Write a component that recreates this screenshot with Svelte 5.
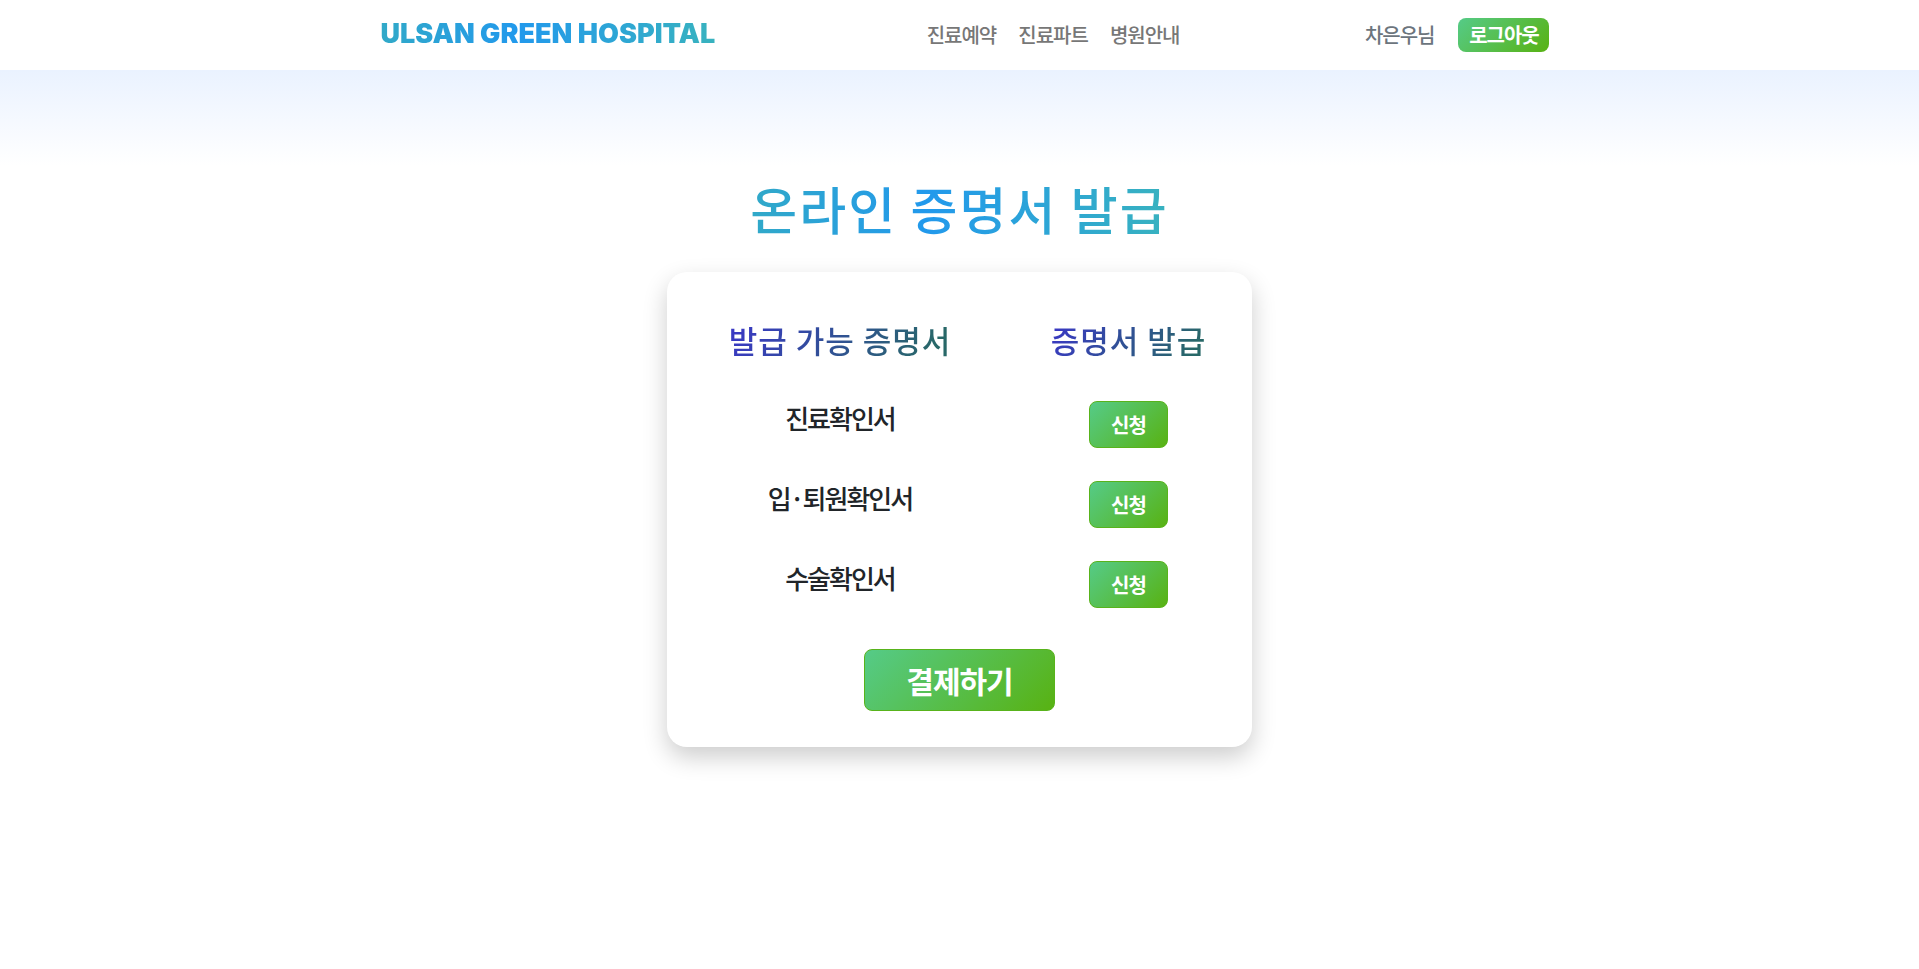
<script>
  const links = ['진료예약', '진료파트', '병원안내'];
  const certificates = ['진료확인서', '입·퇴원확인서', '수술확인서'];
</script>

<header>
  <div class="bar">
    <a class="logo" href="#home">ULSAN GREEN HOSPITAL</a>
    <nav>
      {#each links as link}
        <a href="#menu">{link}</a>
      {/each}
    </nav>
    <div class="user">
      <span>차은우님</span>
      <button class="green logout" type="button">로그아웃</button>
    </div>
  </div>
</header>

<main>
  <h1>온라인 증명서 발급</h1>
  <section class="card">
    <table>
      <thead>
        <tr>
          <th><span>발급 가능 증명서</span></th>
          <th><span>증명서 발급</span></th>
        </tr>
      </thead>
      <tbody>
        {#each certificates as name}
          <tr>
            <td>{name}</td>
            <td><button class="green apply" type="button">신청</button></td>
          </tr>
        {/each}
      </tbody>
    </table>
    <button class="green pay" type="button">결제하기</button>
  </section>
</main>

<style>
  :global(body) {
    margin: 0;
    background: #fff;
    color: #212529;
    font-family: 'Noto Sans CJK KR', 'Noto Sans', sans-serif;
  }
  header {
    background: #fff;
  }
  .bar {
    box-sizing: border-box;
    display: flex;
    align-items: center;
    justify-content: space-between;
    max-width: 1180px;
    height: 70px;
    margin: 0 auto;
    padding-left: 11px;
  }
  a {
    text-decoration: none;
  }
  .logo {
    padding: 0 26px 2px 0;
    font: 900 27px/36px Inter, sans-serif;
    color: transparent;
    background: linear-gradient(to right, #31a9c8, #2299ec 38%, #38b2bf 92%);
    background-clip: text;
  }
  nav {
    display: flex;
    gap: 22px;
  }
  nav a,
  .user {
    font-size: 20px;
    font-weight: 500;
    line-height: 30px;
    letter-spacing: -1px;
  }
  nav a {
    color: #777;
  }
  .user {
    display: flex;
    align-items: center;
    gap: 24px;
    color: #6c757d;
  }
  .green {
    box-sizing: border-box;
    padding: 0;
    border: 1px solid #58b31b;
    border-radius: 8px;
    background: linear-gradient(135deg, #55cb88, #58b212);
    color: #fff;
    font-family: inherit;
    font-weight: 700;
    letter-spacing: -1px;
    cursor: pointer;
  }
  .logout {
    width: 91px;
    height: 34px;
    border: 0;
    font-size: 20px;
    line-height: 32px;
  }
  main {
    box-sizing: border-box;
    display: flex;
    flex-direction: column;
    align-items: center;
    min-height: calc(100vh - 70px);
    padding: 102px 0 48px;
    background: linear-gradient(#eaf2ff, #fff 96px);
  }
  h1 {
    margin: 0 0 28px;
    font-size: 51px;
    font-weight: 500;
    line-height: 72px;
    letter-spacing: 2px;
    color: transparent;
    background: linear-gradient(to right, #31a9c8, #2299ec 42%, #38b2bf);
    background-clip: text;
  }
  .card {
    box-sizing: border-box;
    width: 585px;
    max-width: 100%;
    padding: 36px 0;
    border-radius: 20px;
    background: #fff;
    box-shadow: 0 10px 24px rgba(0, 0, 0, 0.2);
    text-align: center;
  }
  table {
    box-sizing: border-box;
    width: 100%;
    margin-bottom: 8px;
    padding-left: 8px;
    border-spacing: 0;
  }
  th,
  td {
    padding: 0;
  }
  th:first-child {
    width: 330px;
  }
  th {
    height: 80px;
    padding-bottom: 13px;
    vertical-align: top;
    font-size: 31px;
    font-weight: 500;
    line-height: 64px;
    letter-spacing: 1px;
  }
  th span {
    color: transparent;
    background: linear-gradient(120deg, #3a36c8, #286868 90%);
    background-clip: text;
  }
  td {
    height: 80px;
    vertical-align: top;
    font-size: 26px;
    font-weight: 500;
    line-height: 34px;
    letter-spacing: -2px;
  }
  .apply {
    display: block;
    width: 79px;
    height: 47px;
    margin: 0 auto;
    font-size: 20px;
    line-height: 30px;
  }
  .pay {
    width: 191px;
    height: 62px;
    font-size: 30px;
    line-height: 48px;
  }
</style>
